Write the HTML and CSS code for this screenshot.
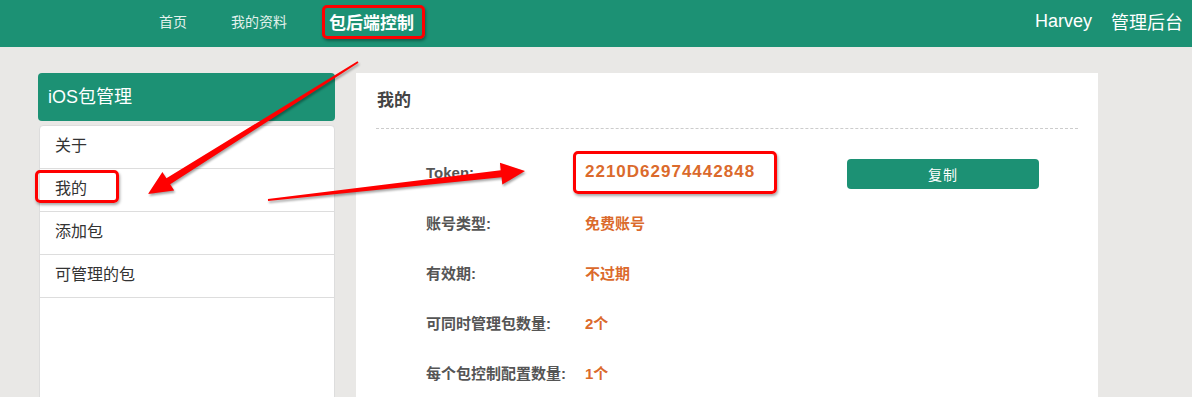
FILE: index.html
```html
<!DOCTYPE html>
<html lang="zh-CN">
<head>
    <meta charset="UTF-8">
    <meta name="viewport" content="width=device-width, initial-scale=1.0">
    <title>包后端控制</title>
    <link rel="stylesheet" href="styles.css">
</head>
<body>
    <div class="topbar">
        <nav class="nav">
            <a href="#" class="nav-item">首页</a>
            <a href="#" class="nav-item">我的资料</a>
            <a href="#" class="nav-item active">包后端控制</a>
        </nav>
        <div class="user">
            <span class="user-name">Harvey</span>
            <a href="#" class="user-admin">管理后台</a>
        </div>
    </div>

    <div class="layout">
        <aside class="sidebar">
            <div class="sidebar-title">iOS包管理</div>
            <ul class="menu">
                <li>关于</li>
                <li>我的</li>
                <li>添加包</li>
                <li>可管理的包</li>
            </ul>
        </aside>

        <main class="panel">
            <h2 class="panel-title">我的</h2>
            <div class="info">
                <div class="info-label">Token:</div>
                <div class="info-value token">2210D62974442848</div>
                <div><button class="copy-btn">复制</button></div>

                <div class="info-label">账号类型:</div>
                <div class="info-value">免费账号</div>
                <div></div>

                <div class="info-label">有效期:</div>
                <div class="info-value">不过期</div>
                <div></div>

                <div class="info-label">可同时管理包数量:</div>
                <div class="info-value">2个</div>
                <div></div>

                <div class="info-label">每个包控制配置数量:</div>
                <div class="info-value">1个</div>
                <div></div>
            </div>
        </main>
    </div>

    <!-- screenshot annotations -->
    <div class="mark mark-nav"></div>
    <div class="mark mark-menu"></div>
    <div class="mark mark-token"></div>
    <svg class="arrows" width="1192" height="397" viewBox="0 0 1192 397">
        <polygon points="358.5,62.8 170.2,184.2 174.2,190.5 148,194 162.4,171.9 166.4,178.2 357.5,61.2" />
        <polygon points="268.1,201 501.5,177.2 502.3,184.6 525,171 499.9,162.8 500.7,170.2 267.9,199" />
    </svg>
</body>
</html>
```

FILE: styles.css
```css
body {
    margin: 0;
    background-color: #e9e8e6;
    font-family: "Liberation Sans", "Noto Sans CJK SC", sans-serif;
    color: #333;
    height: 397px;
    position: relative;
    overflow: hidden;
}
.topbar {
    height: 47px;
    background-color: #1c9174;
    display: flex;
    justify-content: space-between;
    align-items: center;
    padding: 0 9px 5px 137px;
    box-sizing: border-box;
}
.nav {
    display: flex;
    align-items: center;
}
.nav-item {
    color: #e3f1ec;
    text-decoration: none;
    font-size: 14px;
    padding: 0 22px;
}
.nav-item.active {
    color: #fff;
    font-size: 17px;
    font-weight: bold;
    padding-left: 20px;
}
.user {
    display: flex;
    align-items: center;
    gap: 19px;
    color: #fff;
    font-size: 18px;
}
.user-admin {
    color: #fff;
    text-decoration: none;
}

.layout {
    display: flex;
    gap: 21px;
    padding: 26px 0 0 38px;
}
.sidebar {
    width: 297px;
}
.sidebar-title {
    height: 48px;
    line-height: 48px;
    padding-left: 10px;
    background-color: #1c9174;
    color: #fff;
    font-size: 18px;
    border-radius: 4px;
}
.menu {
    list-style: none;
    margin: 4px 0 0 1px;
    padding: 0;
    background-color: #fff;
    border: 1px solid #ddd;
    border-radius: 4px 4px 0 0;
    min-height: 300px;
}
.menu li {
    height: 42px;
    line-height: 40px;
    padding-left: 15px;
    font-size: 16px;
    color: #333;
    border-bottom: 1px solid #ddd;
}

.panel {
    width: 742px;
    min-height: 330px;
    background-color: #fff;
    padding: 0 20px;
    box-sizing: border-box;
}
.panel-title {
    margin: 0;
    padding: 18px 0 17px 1px;
    font-size: 17px;
    line-height: 20px;
    color: #444;
    border-bottom: 1px dashed #ccc;
}
.info {
    display: grid;
    grid-template-columns: 159px 262px 192px;
    grid-auto-rows: 50px;
    align-items: center;
    margin: 18px 0 0 50px;
}
.info-label {
    font-size: 15px;
    font-weight: bold;
    color: #555;
}
.info-value {
    font-size: 15px;
    font-weight: bold;
    color: #db6a2c;
}
.info-value.token {
    font-size: 17px;
    letter-spacing: 1px;
}
.copy-btn {
    display: block;
    margin-top: 4px;
    width: 192px;
    height: 30px;
    border: none;
    border-radius: 4px;
    background-color: #1c9174;
    color: #fff;
    font-family: "Noto Sans CJK SC", sans-serif;
    font-size: 14px;
    letter-spacing: 1px;
    cursor: pointer;
}

.mark {
    position: absolute;
    border: 3px solid #f00;
    border-radius: 5px;
    box-shadow: 1px 2px 3px rgba(0, 0, 0, 0.35);
    box-sizing: border-box;
}
.mark-nav {
    left: 322px;
    top: 5px;
    width: 103px;
    height: 34px;
}
.mark-menu {
    left: 35px;
    top: 170px;
    width: 84px;
    height: 33px;
}
.mark-token {
    left: 573px;
    top: 151px;
    width: 204px;
    height: 43px;
}
.arrows {
    position: absolute;
    left: 0;
    top: 0;
    pointer-events: none;
}
.arrows polygon {
    fill: #f00;
    filter: drop-shadow(1px 2px 1px rgba(0, 0, 0, 0.35));
}
```
